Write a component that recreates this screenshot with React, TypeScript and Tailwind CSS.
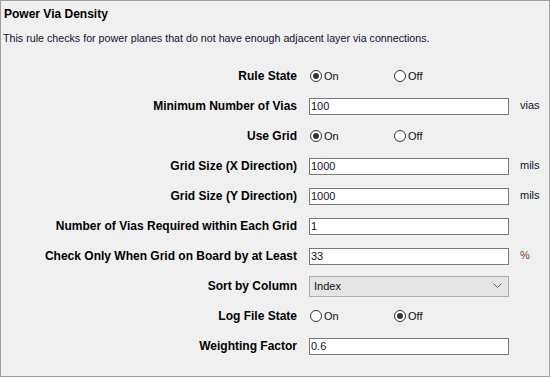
import React from 'react';

type Row =
  | { kind: 'radio'; label: string; on: boolean }
  | { kind: 'text'; label: string; value: string; unit?: string; unitClass?: string }
  | { kind: 'select'; label: string; value: string };

const rows: Row[] = [
  { kind: 'radio', label: 'Rule State', on: true },
  { kind: 'text', label: 'Minimum Number of Vias', value: '100', unit: 'vias' },
  { kind: 'radio', label: 'Use Grid', on: true },
  { kind: 'text', label: 'Grid Size (X Direction)', value: '1000', unit: 'mils' },
  { kind: 'text', label: 'Grid Size (Y Direction)', value: '1000', unit: 'mils' },
  { kind: 'text', label: 'Number of Vias Required within Each Grid', value: '1' },
  { kind: 'text', label: 'Check Only When Grid on Board by at Least', value: '33', unit: '%', unitClass: 'text-[#8a3b24]' },
  { kind: 'select', label: 'Sort by Column', value: 'Index' },
  { kind: 'radio', label: 'Log File State', on: false },
  { kind: 'text', label: 'Weighting Factor', value: '0.6' },
];

const Radio = ({ checked, label }: { checked: boolean; label: string }) => (
  <div className="flex items-center">
    <span className="w-[12px] h-[12px] rounded-full border border-[#333] bg-white flex items-center justify-center">
      {checked && <span className="w-[6px] h-[6px] rounded-full bg-[#333]" />}
    </span>
    <span className="ml-[2px] text-[11px] text-[#111]">{label}</span>
  </div>
);

export default function App() {
  return (
    <div className="w-[551px] h-[378px] bg-white" style={{ fontFamily: '"Liberation Sans", Arial, sans-serif' }}>
      <div className="w-[550px] h-[377px] border border-[#a0a0a0] bg-[#f0f0f0] flex flex-col">
        <div className="pl-[3px] pt-[7px] h-[24px] text-[12px] font-bold text-black leading-[13px]">Power Via Density</div>
        <div className="pl-[2px] pt-[7px] h-[36px] text-[10.7px] text-[#101030] leading-[13px]">
          This rule checks for power planes that do not have enough adjacent layer via connections.
        </div>
        <div className="flex flex-col">
          {rows.map((r) => (
            <div key={r.label} className="h-[30px] flex items-center">
              <div className="w-[297px] text-right text-[12px] font-bold text-black pr-[1px]">{r.label}</div>
              <div className="ml-[11px] w-[200px]">
                {r.kind === 'radio' && (
                  <div className="flex items-center">
                    <div className="w-[84px] ml-[1px]">
                      <Radio checked={r.on} label="On" />
                    </div>
                    <Radio checked={!r.on} label="Off" />
                  </div>
                )}
                {r.kind === 'text' && (
                  <div className="h-[17px] border border-[#7a7a7a] bg-white flex items-center pl-[1px] text-[11px] text-[#101030]">
                    {r.value}
                  </div>
                )}
                {r.kind === 'select' && (
                  <div className="h-[21px] border border-[#adadad] bg-[#e5e5e5] flex items-center justify-between pl-[4px] pr-[6px] text-[11px] text-[#111]">
                    <span>{r.value}</span>
                    <svg width="9" height="6" viewBox="0 0 9 6">
                      <path d="M0.5 0.5 L4.5 4.5 L8.5 0.5" fill="none" stroke="#666" strokeWidth="1" />
                    </svg>
                  </div>
                )}
              </div>
              {r.kind === 'text' && r.unit && (
                <div className={`ml-[11px] -mt-[2px] text-[11px] ${r.unitClass ?? 'text-[#101030]'}`}>{r.unit}</div>
              )}
            </div>
          ))}
        </div>
      </div>
    </div>
  );
}
